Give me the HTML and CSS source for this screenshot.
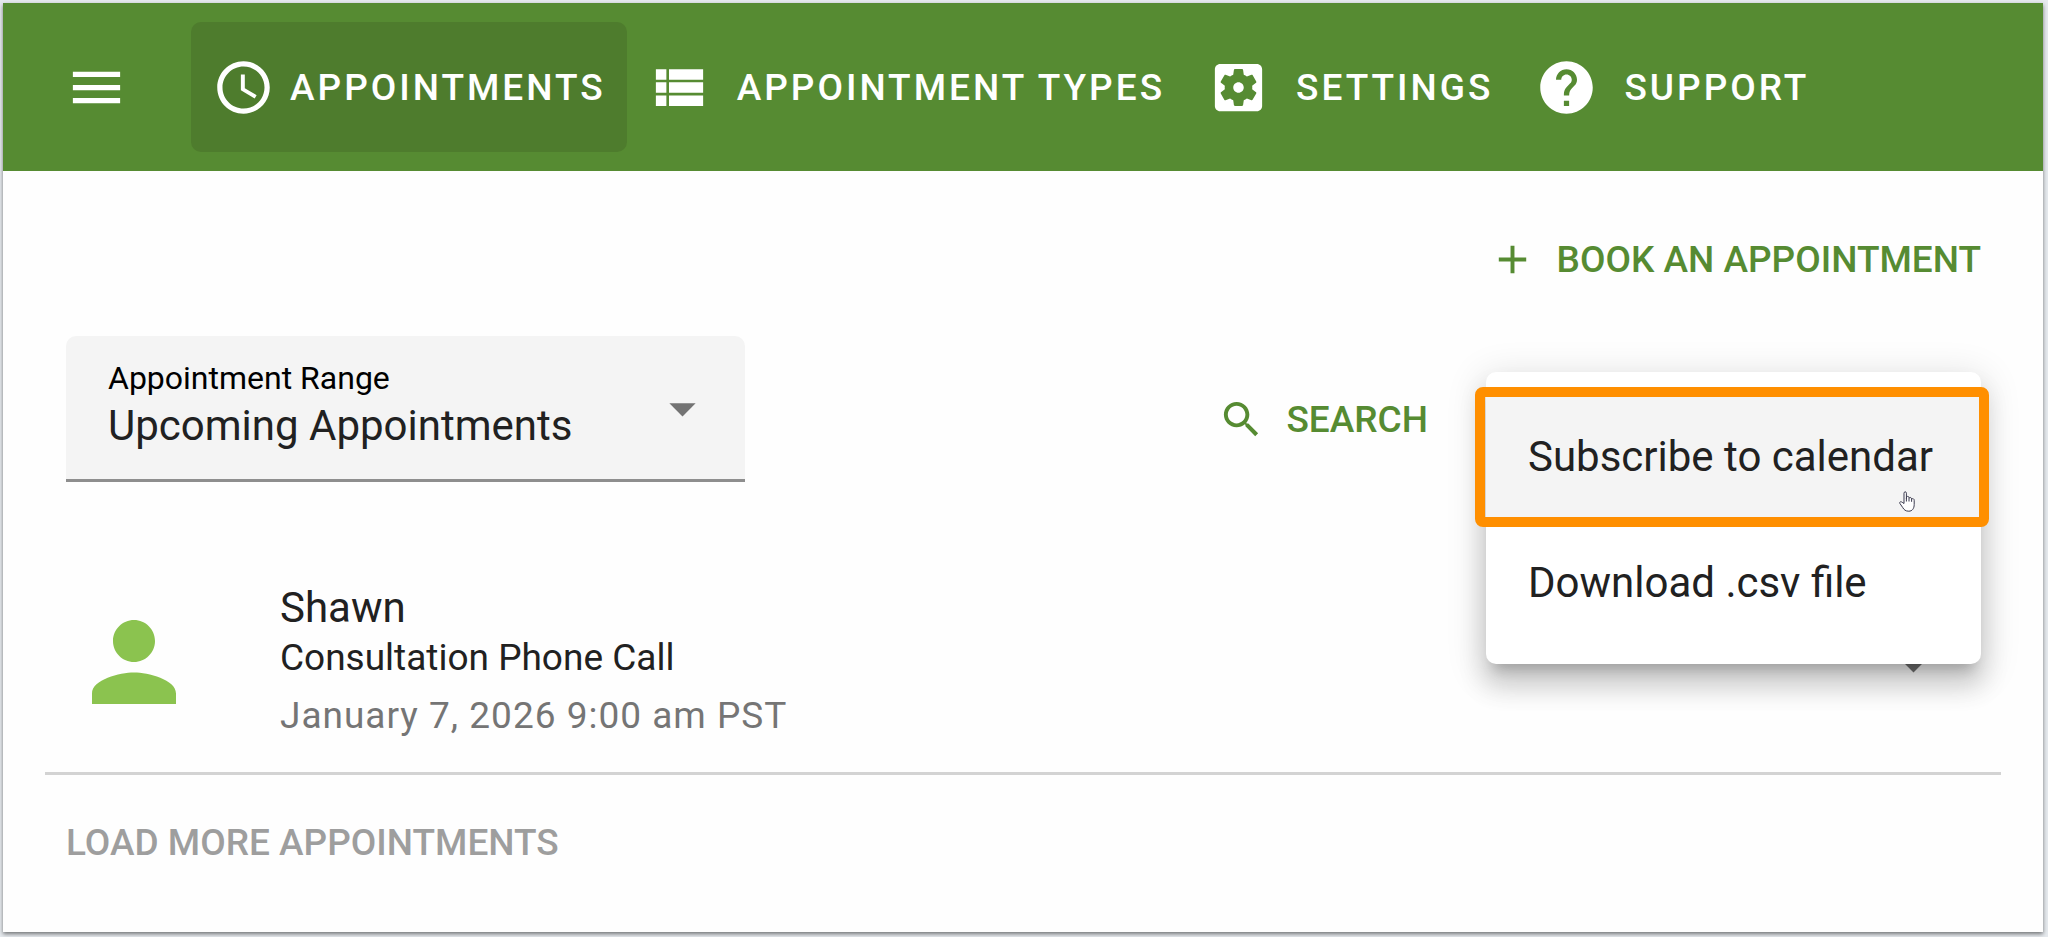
FILE: index.html
```html
<!DOCTYPE html>
<html lang="en">
<head>
    <meta charset="UTF-8">
    <meta name="viewport" content="width=device-width, initial-scale=1.0">
    <title>Appointments</title>
    <link rel="stylesheet" href="styles.css">
</head>
<body>
    <div class="page">
        <header class="app-bar">
            <button class="menu-toggle" type="button" aria-label="Open menu">
                <svg class="icon" viewBox="0 0 24 24"><path d="M3 18h18v-2H3v2zm0-5h18v-2H3v2zm0-7v2h18V6H3z"/></svg>
            </button>
            <nav class="nav">
                <a class="nav-link active" href="#appointments">
                    <svg class="icon" viewBox="0 0 24 24"><path d="M11.99 2C6.47 2 2 6.48 2 12s4.47 10 9.99 10C17.52 22 22 17.52 22 12S17.52 2 11.99 2zM12 20c-4.42 0-8-3.58-8-8s3.58-8 8-8 8 3.58 8 8-3.58 8-8 8zm.5-13H11v6l5.25 3.15.75-1.23-4.5-2.67z"/></svg>
                    Appointments
                </a>
                <a class="nav-link" href="#types">
                    <svg class="icon" viewBox="0 0 24 24"><path d="M3 14h4v-4H3v4zm0 5h4v-4H3v4zM3 9h4V5H3v4zm5 5h13v-4H8v4zm0 5h13v-4H8v4zM8 5v4h13V5H8z"/></svg>
                    Appointment Types
                </a>
                <a class="nav-link" href="#settings">
                    <svg class="icon" viewBox="0 0 24 24"><path d="M12 10c-1.1 0-2 .9-2 2s.9 2 2 2 2-.9 2-2-.9-2-2-2zm7-7H5c-1.11 0-2 .9-2 2v14c0 1.1.89 2 2 2h14c1.11 0 2-.9 2-2V5c0-1.1-.89-2-2-2zm-1.75 9c0 .23-.02.46-.05.68l1.48 1.16c.13.11.17.3.08.45l-1.4 2.42c-.09.15-.27.21-.43.15l-1.74-.7c-.36.28-.76.51-1.18.69l-.26 1.85c-.03.17-.18.3-.35.3h-2.8c-.17 0-.32-.13-.35-.29l-.26-1.85c-.43-.18-.82-.41-1.18-.69l-1.74.7c-.16.06-.34 0-.43-.15l-1.4-2.42c-.09-.15-.05-.34.08-.45l1.48-1.16c-.03-.23-.05-.46-.05-.69 0-.23.02-.46.05-.68l-1.48-1.16c-.13-.11-.17-.3-.08-.45l1.4-2.42c.09-.15.27-.21.43-.15l1.74.7c.36-.28.76-.51 1.18-.69l.26-1.85c.03-.17.18-.3.35-.3h2.8c.17 0 .32.13.35.29l.26 1.85c.43.18.82.41 1.18.69l1.74-.7c.16-.06.34 0 .43.15l1.4 2.42c.09.15.05.34-.08.45l-1.48 1.16c.03.23.05.46.05.69z"/></svg>
                    Settings
                </a>
                <a class="nav-link" href="#support">
                    <svg class="icon" viewBox="0 0 24 24"><path d="M12 2C6.48 2 2 6.48 2 12s4.48 10 10 10 10-4.48 10-10S17.52 2 12 2zm1 17h-2v-2h2v2zm2.07-7.75l-.9.92C13.45 12.9 13 13.5 13 15h-2v-.5c0-1.1.45-2.1 1.17-2.83l1.24-1.26c.37-.36.59-.86.59-1.41 0-1.1-.9-2-2-2s-2 .9-2 2H8c0-2.21 1.79-4 4-4s4 1.79 4 4c0 .88-.36 1.68-.93 2.25z"/></svg>
                    Support
                </a>
            </nav>
        </header>

        <main class="content">
            <div class="book-row">
                <button class="text-button" type="button">
                    <svg class="icon-small" viewBox="0 0 24 24"><path d="M19 13h-6v6h-2v-6H5v-2h6V5h2v6h6v2z"/></svg>
                    Book an appointment
                </button>
            </div>

            <div class="toolbar">
                <div class="select-field">
                    <label for="range">Appointment Range</label>
                    <select id="range">
                        <option>Upcoming Appointments</option>
                    </select>
                    <svg class="select-arrow" viewBox="0 0 24 24"><path d="M7 10l5 5 5-5z"/></svg>
                </div>
                <div class="actions">
                    <button class="text-button" type="button">
                        <svg class="icon-small" viewBox="0 0 24 24"><path d="M15.5 14h-.79l-.28-.27C15.41 12.59 16 11.11 16 9.5 16 5.91 13.09 3 9.5 3S3 5.91 3 9.5 5.91 16 9.5 16c1.61 0 3.09-.59 4.23-1.57l.27.28v.79l5 4.99L20.49 19l-4.99-5zm-6 0C7.01 14 5 11.99 5 9.5S7.01 5 9.5 5 14 7.01 14 9.5 11.99 14 9.5 14z"/></svg>
                        Search
                    </button>
                    <div class="menu-anchor">
                        <div class="menu">
                            <button class="menu-item hovered" type="button">Subscribe to calendar</button>
                            <button class="menu-item" type="button">Download .csv file</button>
                            <div class="highlight"></div>
                            <svg class="pointer" viewBox="0 0 16 21"><path d="M5 12.5V2.2C5 .3 7.4.3 7.4 2.2V7.5L7.6 5.8C8.8 5 9.9 5.5 10 6.5L10.2 7C11.3 5.9 12.5 6.7 12.5 7.7L12.7 8C13.9 7.2 15.2 7.9 15.2 9.3V13.5C15.2 17.5 13.2 20.2 9.8 20.2C6.5 20.2 5 18.8 3.7 16.5L.8 12.3C.2 10.9 1.9 10.2 3.2 11.3Z"/><path d="M7.4 7v3.5M10 6.8v3.7M12.6 7.8v3"/></svg>
                        </div>
                    </div>
                </div>
            </div>

            <ul class="appointments">
                <li class="appointment">
                    <svg class="avatar" viewBox="0 0 24 24"><path d="M12 12c2.21 0 4-1.79 4-4s-1.79-4-4-4-4 1.79-4 4 1.79 4 4 4zm0 2c-2.67 0-8 1.34-8 4v2h16v-2c0-2.66-5.33-4-8-4z"/></svg>
                    <div class="details">
                        <div class="name">Shawn</div>
                        <div class="type">Consultation Phone Call</div>
                        <div class="time">January 7, 2026 9:00 am PST</div>
                    </div>
                    <button class="expand" type="button" aria-label="Show details">
                        <svg class="icon" viewBox="0 0 24 24"><path d="M7 10l5 5 5-5z"/></svg>
                    </button>
                </li>
            </ul>

            <button class="load-more" type="button" disabled>Load more appointments</button>
        </main>
    </div>
</body>
</html>
```

FILE: styles.css
```css
:root {
    --primary: #568b32;
    --primary-dark: #4e7c2d;
    --avatar: #8bc34f;
    --text: #212121;
    --text-muted: #757575;
    --text-disabled: #9e9e9e;
    --surface: #f4f4f4;
    --highlight: #ff8f00;
}

* {
    box-sizing: border-box;
}

body {
    margin: 0;
    padding: 3px 5px 5px 3px;
    min-height: 100vh;
    display: flex;
    background-color: #e6eaee;
    font-family: Roboto, sans-serif;
    color: var(--text);
}

button {
    margin: 0;
    padding: 0;
    border: none;
    background: none;
    font-family: inherit;
    cursor: pointer;
}

svg {
    display: block;
    flex: none;
    fill: currentColor;
}

.icon {
    width: 63px;
    height: 63px;
}

.icon-small {
    width: 47px;
    height: 47px;
}

.page {
    flex: 1;
    background-color: #fefefe;
    box-shadow: 0 2px 4px rgba(0, 0, 0, 0.5);
}

/* App bar */
.app-bar {
    display: flex;
    align-items: center;
    gap: 63px;
    height: 168px;
    padding-left: 62px;
    background-color: var(--primary);
    color: #fff;
}

.menu-toggle {
    color: inherit;
}

.nav {
    display: flex;
}

.nav-link {
    display: flex;
    align-items: center;
    gap: 26px;
    height: 130px;
    padding: 0 21px;
    border-radius: 10px;
    color: inherit;
    font-size: 37px;
    font-weight: 500;
    letter-spacing: 3px;
    text-decoration: none;
    text-transform: uppercase;
    white-space: nowrap;
}

.nav-link.active {
    gap: 15px;
    background-color: var(--primary-dark);
}

/* Content */
.content {
    padding: 41px 42px;
}

.text-button {
    display: flex;
    align-items: center;
    gap: 21px;
    height: 94px;
    color: var(--primary);
    font-size: 37px;
    font-weight: 500;
    text-transform: uppercase;
    white-space: nowrap;
}

.book-row {
    display: flex;
    justify-content: flex-end;
    padding-right: 20px;
}

.toolbar {
    display: flex;
    justify-content: space-between;
    margin-top: 30px;
    padding: 0 20px 0 21px;
}

.select-field {
    position: relative;
    width: 679px;
    padding: 22px 42px 28px;
    border-bottom: 3px solid #8e8e8e;
    border-radius: 10px 10px 0 0;
    background-color: var(--surface);
}

.select-field label {
    display: block;
    margin-bottom: 3px;
    color: #000;
    font-size: 32px;
    line-height: 40px;
}

.select-field select {
    display: block;
    width: 100%;
    height: 50px;
    padding: 0;
    border: none;
    appearance: none;
    background: none;
    color: inherit;
    font-family: inherit;
    font-size: 42px;
    line-height: 50px;
}

.select-arrow {
    position: absolute;
    top: 41px;
    right: 31px;
    width: 63px;
    height: 63px;
    color: #737373;
    pointer-events: none;
}

.actions {
    display: flex;
    gap: 58px;
    padding-top: 36px;
}

/* Export menu */
.menu-anchor {
    position: relative;
    width: 495px;
}

.menu {
    position: absolute;
    top: 0;
    right: 0;
    z-index: 1;
    width: 100%;
    padding: 21px 0 19px;
    border-radius: 10px;
    background-color: #fff;
    box-shadow: 0 13px 13px -8px rgba(0, 0, 0, 0.2),
        0 21px 26px 3px rgba(0, 0, 0, 0.14),
        0 8px 37px 5px rgba(0, 0, 0, 0.12);
}

.menu-item {
    display: block;
    width: 100%;
    height: 126px;
    padding: 0 42px;
    color: var(--text);
    font-size: 42px;
    text-align: left;
    white-space: nowrap;
}

.menu-item.hovered {
    background-color: var(--surface);
}

.highlight {
    position: absolute;
    top: 15px;
    right: -8px;
    left: -11px;
    height: 140px;
    border: 10px solid var(--highlight);
    border-radius: 8px;
    pointer-events: none;
}

.pointer {
    position: absolute;
    top: 119px;
    right: 66px;
    width: 16px;
    height: 21px;
    fill: #fff;
    stroke: #3b3b4f;
    stroke-width: 1;
}

/* Appointment list */
.appointments {
    margin: 0;
    padding: 0;
    list-style: none;
}

.appointment {
    display: flex;
    align-items: center;
    gap: 83px;
    padding: 101px 56px 31px 26px;
    border-bottom: 3px solid #d3d3d3;
}

.avatar {
    width: 126px;
    height: 126px;
    color: var(--avatar);
}

.details {
    flex: 1;
}

.name,
.type,
.time {
    font-size: 37px;
    line-height: 50px;
}

.name {
    font-size: 42px;
}

.time {
    margin-top: 8px;
    color: var(--text-muted);
    letter-spacing: 1px;
}

.expand {
    margin-top: 5px;
    color: #737373;
}

.load-more {
    margin: 43px 21px 0;
    color: var(--text-disabled);
    font-size: 37px;
    font-weight: 500;
    line-height: 50px;
    text-transform: uppercase;
    cursor: default;
}
```
